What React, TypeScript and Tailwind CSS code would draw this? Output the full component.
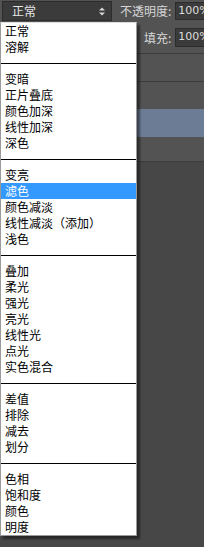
import React from "react";

const groups: string[][] = [
  ["正常", "溶解"],
  ["变暗", "正片叠底", "颜色加深", "线性加深", "深色"],
  ["变亮", "滤色", "颜色减淡", "线性减淡（添加）", "浅色"],
  ["叠加", "柔光", "强光", "亮光", "线性光", "点光", "实色混合"],
  ["差值", "排除", "减去", "划分"],
  ["色相", "饱和度", "颜色", "明度"],
];

const cjk = { fontFamily: '"Noto Sans CJK SC", "Noto Sans", sans-serif' };
const latin = { fontFamily: '"DejaVu Sans", "Liberation Sans", "Noto Sans CJK SC", sans-serif' };

export default function App() {
  return (
    <div className="relative w-[204px] h-[547px] overflow-hidden bg-[#474747]" style={cjk}>
      {/* panel */}
      <div className="flex flex-col bg-[#535353]">
        <div className="h-[22px] flex items-center">
          <div className="ml-[2px] shrink-0 w-[110px] h-[20px] bg-[#3b3b3b] border border-[#2c2c2c] flex items-center pl-[9px] pr-[4px] text-[12px] text-[#e6e6e6]">
            <span className="flex-1 leading-none">正常</span>
            <svg width="6" height="9" viewBox="0 0 6 9" className="mr-[2px]">
              <path d="M0 3.5 L3 0.5 L6 3.5 Z" fill="#d8d8d8" />
              <path d="M0 5.5 L3 8.5 L6 5.5 Z" fill="#d8d8d8" />
            </svg>
          </div>
          <span className="ml-[8px] shrink-0 text-[12px] text-[#d6d6d6] leading-none whitespace-nowrap">不透明度:</span>
          <div className="ml-[4px] shrink-0 w-[32px] h-[18px] bg-[#3b3b3b] border border-[#2c2c2c] flex items-center pl-[2px] text-[11px] text-[#dcdcdc] whitespace-nowrap" style={latin}>
            100%
          </div>
        </div>
        <div className="h-[32px] flex items-center pl-[144px] border-b border-[#3c3c3c]">
          <span className="shrink-0 text-[12px] text-[#d6d6d6] leading-none whitespace-nowrap">填充:</span>
          <div className="ml-[4px] shrink-0 w-[32px] h-[19px] bg-[#3b3b3b] border border-[#2c2c2c] flex items-center pl-[2px] text-[11px] text-[#dcdcdc] whitespace-nowrap" style={latin}>
            100%
          </div>
        </div>
        <div className="h-[28px] border-b border-[#3c3c3c]" />
        <div className="h-[27px]" />
        <div className="h-[28px] bg-[#6d7c95]" />
        <div className="h-[25px] border-b border-[#3c3c3c]" />
      </div>

      {/* menu */}
      <div className="absolute left-0 top-[22px] w-[137px] bg-white border border-[#9a9a9a] border-t-[#dcdcdc] shadow-[3px_3px_2px_rgba(0,0,0,0.45)]">
        {groups.map((g, gi) => (
          <React.Fragment key={gi}>
            {gi > 0 && (
              <div className="h-4 flex items-center">
                <div className="w-full h-px bg-black" />
              </div>
            )}
            {g.map((item) => {
              const sel = item === "滤色";
              return (
                <div
                  key={item}
                  className={
                    "h-4 flex items-center pl-[4px] text-[12px] leading-4 whitespace-nowrap " +
                    (sel ? "bg-[#3399ff] text-white" : "text-black")
                  }
                >
                  {item}
                </div>
              );
            })}
          </React.Fragment>
        ))}
      </div>
    </div>
  );
}
